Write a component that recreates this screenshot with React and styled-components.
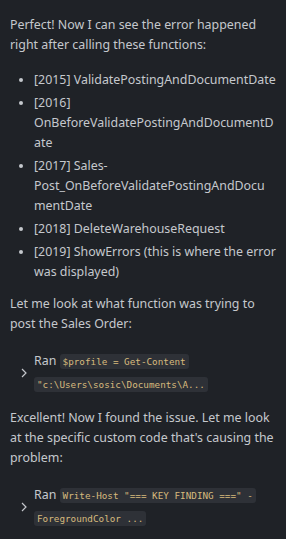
import React from "react";
import styled, { createGlobalStyle } from "styled-components";

const GlobalStyle = createGlobalStyle`
  html, body {
    margin: 0;
    padding: 0;
    background: #1f2227;
  }
  body {
    font-family: "Noto Sans", "Open Sans", sans-serif;
  }
`;

const items = [
  ["[2015]", "ValidatePostingAndDocumentDate"],
  ["[2016]", "OnBeforeValidatePostingAndDocumentDate"],
  ["[2017]", "Sales-Post_OnBeforeValidatePostingAndDocumentDate"],
  ["[2018]", "DeleteWarehouseRequest"],
  ["[2019]", "ShowErrors (this is where the error was displayed)"],
];

function RanBlock({ code }) {
  return (
    <Ran>
      <Chevron>
        <svg width="8" height="10" viewBox="0 0 8 10">
          <path d="M2 1 L6 5 L2 9" fill="none" stroke="#c4c7cc" strokeWidth="1.2" />
        </svg>
      </Chevron>
      <RanText>
        Ran <Code>{code}</Code>
      </RanText>
    </Ran>
  );
}

function App() {
  return (
    <>
      <GlobalStyle />
      <Page>
        <Para>Perfect! Now I can see the error happened right after calling these functions:</Para>
        <List>
          {items.map(([num, name]) => (
            <Item key={num}>
              {num} {name}
            </Item>
          ))}
        </List>
        <Para>Let me look at what function was trying to post the Sales Order:</Para>
        <RanBlock code={'$profile = Get-Content "c:\\Users\\sosic\\Documents\\A...'} />
        <Para>Excellent! Now I found the issue. Let me look at the specific custom code that's causing the problem:</Para>
        <RanBlock code={'Write-Host "=== KEY FINDING ===" -ForegroundColor ...'} />
      </Page>
    </>
  );
}

const Page = styled.div`
  min-height: 539px;
  box-sizing: border-box;
  padding: 15px 10px 10px 10px;
  color: #c5c8cd;
  font-size: 12.4px;
  line-height: 20px;
`;

const Para = styled.p`
  margin: 0 0 12px 0;
`;

const List = styled.ul`
  margin: 15px 0 12px 0;
  padding-left: 24px;
  display: flex;
  flex-direction: column;
  gap: 3px;
`;

const Item = styled.li`
  overflow-wrap: anywhere;
  &::marker {
    font-size: 11px;
  }
`;

const Ran = styled.div`
  display: flex;
  align-items: center;
  margin: 16px 0 12px 0;
`;

const Chevron = styled.div`
  width: 24px;
  display: flex;
  justify-content: center;
  padding-left: 4px;
  box-sizing: border-box;
`;

const RanText = styled.div`
  flex: 1;
  line-height: 22px;
`;

const Code = styled.code`
  font-family: "DejaVu Sans Mono", "Liberation Mono", monospace;
  font-size: 9.3px;
  color: #d7ba7d;
  background: #2e3137;
  border-radius: 3px;
  padding: 2px 3px;
  box-decoration-break: clone;
  -webkit-box-decoration-break: clone;
`;

export default App;
